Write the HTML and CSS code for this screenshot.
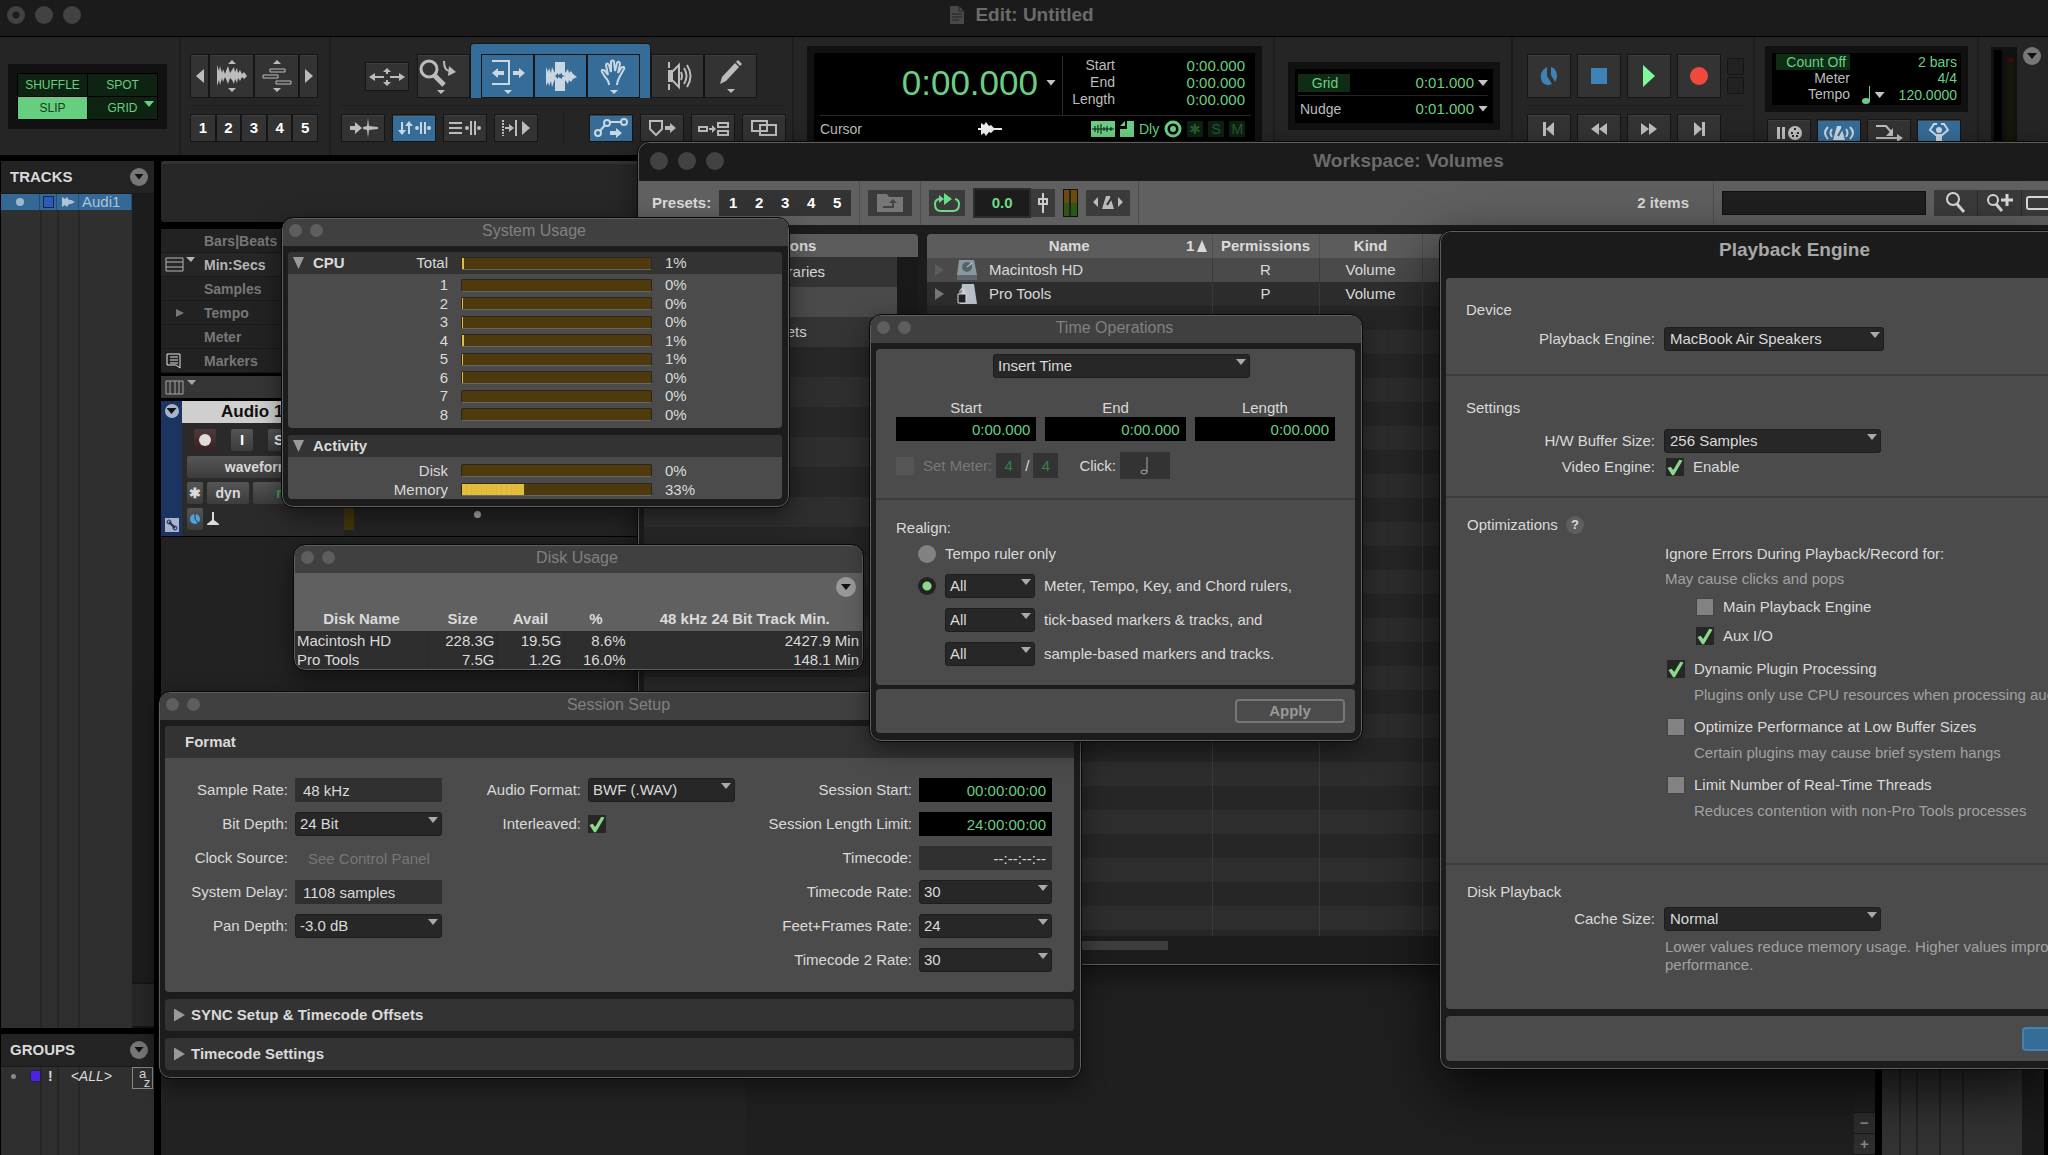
FILE: index.html
```html
<!DOCTYPE html>
<html lang="en">
<head>
    <meta charset="UTF-8">
    <meta name="viewport" content="width=device-width, initial-scale=1.0">
    <title>Edit: Untitled</title>
    <link rel="stylesheet" href="styles.css">
</head>
<body>

    <!-- Edit window title -->
    <header class="main-title">
        <div class="dots"><i class="dirty"></i><i></i><i></i></div>
        <h1>
            <svg width="16" height="20" viewBox="0 0 16 20"><path d="M1 1h9l5 5v13H1z" fill="#484848"/><path d="M10 1v5h5M3 9h10M3 12h10M3 15h7" stroke="#222" fill="none"/></svg>
            Edit: Untitled
        </h1>
    </header>

    <!-- Edit toolbar -->
    <div class="toolbar">
        <section class="tb-modes">
            <div class="modes">
                <button>SHUFFLE</button>
                <button>SPOT</button>
                <button class="active">SLIP</button>
                <button>GRID<span class="caret"></span></button>
            </div>
        </section>

        <section class="tb-zoom">
            <div class="joined">
                <button class="arrow" aria-label="Zoom out"><svg width="8" height="14" viewBox="0 0 8 14"><path d="M8 0v14L0 7z"/></svg></button>
                <button aria-label="Audio zoom"><svg width="32" height="34" viewBox="0 0 32 34"><path d="M12 5l4-4 4 4zM12 29l4 4 4-4zM1 6l2 6 1-5 2 7 1-4 2 5 1-3 2-5 2 7 2-3 2-3 1 5 2-4 1 5 2-3 2 4 2-2 3 4-3 3-2-2-2 4-2-3-1 5-2-4-1 5-2-4-2-2-2 6-2-5-1-2-2 5-1-4-2 7-1-5-2 6z"/></svg></button>
                <button aria-label="MIDI zoom"><svg width="32" height="34" viewBox="0 0 32 34"><path d="M12 5l4-4 4 4zM12 29l4 4 4-4z"/><path d="M9 10h15v3H9zM2 16h15v3H2zM15 22h15v3H15z" fill="none" stroke="currentColor"/></svg></button>
                <button class="arrow" aria-label="Zoom in"><svg width="8" height="14" viewBox="0 0 8 14"><path d="M0 0v14l8-7z"/></svg></button>
            </div>
            <div class="rule"></div>
            <div class="presets"><button>1</button><button>2</button><button>3</button><button>4</button><button>5</button></div>
        </section>

        <section class="tb-tools">
            <div class="tool-row">
                <button class="small" aria-label="Zoom toggle"><svg width="36" height="20" viewBox="0 0 36 20"><path d="M5 10h10M21 10h10M18 4v3M18 13v3" stroke="currentColor" stroke-width="2"/><path d="M0 10l6-4v8zM36 10l-6-4v8zM18 1l4 4h-8zM18 19l4-4h-8z"/></svg></button>
                <button class="tool zoomer" aria-label="Zoomer"><svg width="40" height="38" viewBox="0 0 40 38"><circle cx="11" cy="12" r="8" fill="none" stroke="currentColor" stroke-width="3"/><path d="M16 18l10 10" stroke="currentColor" stroke-width="5"/><path d="M26 4c0 6 2 10 6 10" stroke="currentColor" stroke-width="2" fill="none"/><path d="M31 9l7 6-8 4zM19 33h8l-4 4z"/></svg></button>
                <div class="smart">
                    <button class="tool" aria-label="Trim"><svg width="40" height="38" viewBox="0 0 40 38"><path d="M4 4h17v23H4" fill="none" stroke="currentColor" stroke-width="2"/><path d="M4 16l6-5v3h6v4h-6v3zM37 16l-6-5v3h-6v4h6v3zM16 33h8l-4 4z"/></svg></button>
                    <button class="tool" aria-label="Selector"><svg width="36" height="34" viewBox="0 0 36 34"><path d="M3 8l2 5 1-4 2 5 1-6 3 6V3h10v11l3-4 1 4 2-2 2 3 4 3-4 2-2 3-2-2-1 4-3-4v11H12V20l-3 8-1-6-2 5-1-4-2 4z"/><path d="M12 17l3-3v2l2-1 2-1v2l3 1-3 1v2l-2-1-2-1v2z" fill="#356a94"/></svg></button>
                    <button class="tool" aria-label="Grabber"><svg width="30" height="38" viewBox="0 0 30 38"><path d="M10 28c0-4-2-6-4-8l-3-5c-1-2 1-3 3-1l3 4-2-10c0-2 2-2 3 0l2 7V5c0-2 3-2 3 0l1 9 2-8c1-2 3-1 3 1l-2 9 3-5c2-2 4-1 3 1l-5 9c-1 2-2 4-2 7" fill="none" stroke="currentColor" stroke-width="2"/><path d="M11 33h8l-4 4z"/></svg></button>
                </div>
                <button class="tool" aria-label="Scrubber"><svg width="28" height="32" viewBox="0 0 28 32"><path d="M5 2v6M5 24v6M5 11h4l6-6v22l-6-6H5z" stroke="currentColor" fill="none" stroke-width="2"/><path d="M4 11h5v10H4z"/><path d="M17 12q2 4 0 8M20 8q5 8 0 16M23 5q7 11 0 22" fill="none" stroke="currentColor" stroke-width="2"/></svg></button>
                <button class="tool" aria-label="Pencil"><svg width="26" height="36" viewBox="0 0 26 36"><path d="M2 26l2-7L17 5l4 4L8 23zM18 4l2-2 4 4-2 2zM9 31h8l-4 4z"/></svg></button>
            </div>
            <div class="rule"></div>
            <div class="opt-row">
                <button aria-label="Tab to transients"><svg width="30" height="20" viewBox="0 0 30 20"><path d="M2 8h5V4l7 6-7 6v-4H2z"/><path d="M20 0l1 8 9 1v2l-9 1-1 8-1-8-4-1V9l4-1z"/></svg></button>
                <button class="on" aria-label="Link timeline"><svg width="34" height="20" viewBox="0 0 34 20"><path d="M5 4v12M12 4v12M24 4v12M28 4v12" stroke="currentColor" stroke-width="2"/><path d="M1 12h8l-4 5zM8 8h8l-4-5z"/><circle cx="20" cy="10" r="2"/><circle cx="32" cy="10" r="2"/></svg></button>
                <button aria-label="Link track"><svg width="34" height="20" viewBox="0 0 34 20"><path d="M1 5h13M1 10h13M1 15h13M23 3v14M27 3v14" stroke="currentColor" stroke-width="2"/><circle cx="19" cy="10" r="2"/><circle cx="31" cy="10" r="2"/></svg></button>
                <button aria-label="Insertion follows playback"><svg width="30" height="20" viewBox="0 0 30 20"><path d="M2 2v16" stroke="currentColor" stroke-width="2" stroke-dasharray="2 1"/><path d="M4 10h6M15 2v16" stroke="currentColor" stroke-width="2"/><path d="M8 6l5 4-5 4zM21 3v14l8-7z"/></svg></button>
                <span class="split"></span>
                <button class="on" aria-label="Automation follows edit"><svg width="34" height="20" viewBox="0 0 34 20"><path d="M6 13l5-6M16 4h11" stroke="currentColor" stroke-width="2"/><g fill="none" stroke="currentColor" stroke-width="2"><circle cx="4" cy="15" r="3"/><circle cx="13" cy="5" r="3"/><circle cx="30" cy="4" r="3"/></g><path d="M16 13h6v-3l6 5-6 5v-3h-6z"/></svg></button>
                <button aria-label="Mirrored editing"><svg width="30" height="20" viewBox="0 0 30 20"><path d="M3 3h12v8l-6 6-6-6z" fill="none" stroke="currentColor" stroke-width="2"/><path d="M18 8h5V5l6 5-6 5v-3h-5z"/></svg></button>
                <button aria-label="Layered editing"><svg width="32" height="20" viewBox="0 0 32 20"><path d="M2 9h8v4H2zM21 5h10v4H21zM21 13h10v4H21z" fill="none" stroke="currentColor" stroke-width="2"/><path d="M12 10h3V7l4 4-4 4v-3h-3z"/></svg></button>
                <button aria-label="Clip overlap"><svg width="26" height="20" viewBox="0 0 26 20"><path d="M1 3h15v10H1zM9 7h16v10H9z" fill="none" stroke="currentColor" stroke-width="2"/></svg></button>
            </div>
        </section>

        <section class="tb-counter">
            <div class="counter">
                <div class="counter-top">
                    <div class="main-counter"><output>0:00.000</output><span class="caret"></span></div>
                    <dl class="selection">
                        <dt>Start</dt><dd>0:00.000</dd>
                        <dt>End</dt><dd>0:00.000</dd>
                        <dt>Length</dt><dd>0:00.000</dd>
                    </dl>
                </div>
                <div class="counter-bottom">
                    <span class="cursor-label">Cursor</span>
                    <span class="cursor-icon"><svg width="24" height="16" viewBox="0 0 24 16"><path d="M0 7h3V2l3 2 2-3 3 4 2-1 3 3h8v2h-8l-3 3-2-1-3 4-2-3-3 2V9H0z"/></svg></span>
                    <span class="status">
                        <svg width="24" height="16" viewBox="0 0 24 16"><path d="M0 0h24v16H0z"/><path d="M1 8h22M4 5v6M7 4v8M10 3v10M13 6v4M16 5v6M20 6v4" stroke="#06210d"/></svg>
                        <svg width="14" height="16" viewBox="0 0 14 16"><path d="M7 0h7v16H0V8h7z"/><path d="M5 0v5H0z"/></svg>
                        <b>Dly</b>
                        <svg width="18" height="18" viewBox="0 0 18 18"><circle cx="9" cy="9" r="7" fill="none" stroke="currentColor" stroke-width="3"/><circle cx="9" cy="9" r="3"/></svg>
                        <i>✱</i><i>S</i><i>M</i>
                    </span>
                </div>
            </div>
        </section>

        <section class="tb-grid">
            <div class="lcd">
                <div class="lcd-row"><span class="lit">Grid</span><span class="val">0:01.000</span><span class="caret"></span></div>
                <div class="lcd-row"><span>Nudge</span><span class="val">0:01.000</span><span class="caret"></span></div>
            </div>
        </section>

        <section class="tb-transport">
            <div class="transport-main">
                <button aria-label="Online"><svg width="18" height="20" viewBox="0 0 18 20"><g fill="#3f82b5"><path d="M7 1v9l5 8q-6 3-10-2Q-2 6 7 1z"/><path d="M11 1q6 2 6 9 0 3-2 6l-4-7z"/></g></svg></button>
                <button aria-label="Stop"><svg width="16" height="16"><path d="M0 0h16v16H0z" fill="#3f82b5"/></svg></button>
                <button aria-label="Play"><svg width="12" height="22"><path d="M0 0l12 11L0 22z" fill="#7dfb9c"/></svg></button>
                <button aria-label="Record"><svg width="18" height="18"><circle cx="9" cy="9" r="9" fill="#ee4a3c"/></svg></button>
                <span class="lights"><i></i><i></i></span>
            </div>
            <div class="rule"></div>
            <div class="transport-sub">
                <button aria-label="Return to zero"><svg width="14" height="14"><path d="M1 0h3v14H1zM12 0v14L4 7z"/></svg></button>
                <button aria-label="Rewind"><svg width="16" height="12"><path d="M8 0v12L0 6zM16 0v12L8 6z"/></svg></button>
                <button aria-label="Fast forward"><svg width="16" height="12"><path d="M0 0v12l8-6zM8 0v12l8-6z"/></svg></button>
                <button aria-label="Go to end"><svg width="14" height="14"><path d="M10 0h3v14h-3zM2 0v14l8-7z"/></svg></button>
            </div>
        </section>

        <section class="tb-tempo">
            <div class="lcd tempo">
                <span class="lit">Count Off</span><span class="val">2 bars</span>
                <span>Meter</span><span class="val">4/4</span>
                <span>Tempo</span>
                <span class="val note"><svg width="9" height="18" viewBox="0 0 9 18"><path d="M7 0h1v14H7z"/><ellipse cx="4" cy="15" rx="4" ry="3"/></svg><span class="caret"></span><em>120.0000</em></span>
            </div>
            <div class="tempo-sub">
                <button aria-label="Wait for note"><svg width="26" height="18" viewBox="0 0 26 18"><path d="M1 3h3v12H1zM6 3h3v12H6z"/><circle cx="19" cy="9" r="7"/><path d="M15 9h2M21 9h2M18 5h2M16 12h2M20 12h2" stroke="#2a2a2a" stroke-width="2"/></svg></button>
                <button class="on" aria-label="Metronome"><svg width="32" height="18" viewBox="0 0 32 18"><path d="M5 3q-6 6 0 12M9 5q-3 4 0 8M27 3q6 6 0 12M23 5q3 4 0 8" fill="none" stroke="currentColor" stroke-width="2"/><path d="M14 2h4l4 14H10z"/><path d="M15 12l5-9" stroke="#356a94" stroke-width="2"/></svg></button>
                <button aria-label="Count off"><svg width="28" height="20" viewBox="0 0 28 20"><path d="M1 3h10l6 7M1 15h22" fill="none" stroke="currentColor" stroke-width="2"/><path d="M18 5v8h-7zM22 11l6 4-6 4z"/></svg></button>
                <button class="on" aria-label="Conductor"><svg width="22" height="22" viewBox="0 0 22 22"><circle cx="11" cy="8" r="3"/><path d="M9 2H6L2 8l7 6v7h4v-7l7-6-4-6h-3" fill="none" stroke="currentColor" stroke-width="2"/><path d="M8 12h6v10H8z"/></svg></button>
            </div>
        </section>

        <section class="tb-end">
            <div class="out-meter"><i></i></div>
            <button class="menu-dot" aria-label="Toolbar menu"></button>
        </section>
    </div>

    <!-- Edit window body -->
    <main class="edit">
        <aside class="side">
            <div class="side-head"><h2>TRACKS</h2><button class="menu-dot" aria-label="Tracks menu"></button></div>
            <div class="side-list tracks">
                <div class="track-item"><span class="c1"><i class="vis"></i></span><span class="c2"><i class="swatch"></i></span><span class="c3"><svg width="14" height="12" viewBox="0 0 14 12"><path d="M1 1l3 2 2-2 2 3h2l4 2-4 2H8l-2 3-2-2-3 2z"/></svg></span><span class="c4">Audi1</span></div>
                <div class="gutter"><i></i></div>
            </div>
            <div class="side-head groups-head"><h2>GROUPS</h2><button class="menu-dot" aria-label="Groups menu"></button></div>
            <div class="side-list groups">
                <div class="group-item"><i class="vis"></i><i class="swatch"></i><b>!</b><em>&lt;ALL&gt;</em></div>
                <button class="az" aria-label="Sort"><span>a</span><span class="z">z</span></button>
            </div>
        </aside>

        <div class="timeline">
            <div class="overview"></div>
            <ul class="rulers">
                <li>Bars|Beats</li>
                <li class="current"><svg width="26" height="16" viewBox="0 0 26 16"><path d="M1 1h17v13H1zM1 5h17M1 10h17" fill="none" stroke="currentColor"/><path d="M21 0h9l-4 5z"/></svg>Min:Secs</li>
                <li>Samples</li>
                <li><svg width="26" height="16" viewBox="0 0 26 16"><path d="M11 4v8l8-4z"/></svg>Tempo</li>
                <li>Meter</li>
                <li><svg width="26" height="16" viewBox="0 0 26 16"><path d="M2 1h13v14l-4-3H2zM5 4h8M5 7h8M5 10h8" fill="none" stroke="#e4e4e4"/></svg>Markers</li>
            </ul>
            <div class="columns-bar"><svg width="32" height="16" viewBox="0 0 32 16"><path d="M1 1h17v13H1zM5 1v13M10 1v13M14 1v13" fill="none" stroke="currentColor"/><path d="M22 0h9l-4 5z"/></svg></div>

            <div class="track">
                <div class="track-color">
                    <button class="menu-dot" aria-label="Track menu"></button>
                    <svg width="14" height="14" viewBox="0 0 14 14"><path d="M0 0h14v14H0z" fill="#a9b4cc"/><path d="M4 4l6 6" stroke="#1d2a4c" stroke-width="2"/><circle cx="4" cy="4" r="2" fill="none" stroke="#1d2a4c"/><circle cx="10" cy="10" r="2" fill="none" stroke="#1d2a4c"/></svg>
                </div>
                <div class="track-head">
                    <h3>Audio 1</h3>
                    <div class="track-row wide"><button class="rec" aria-label="Record enable"><i></i></button><button>I</button><button>S</button></div>
                    <div class="track-row"><button class="view">waveform</button></div>
                    <div class="track-row"><button class="tiny">✱</button><button class="dyn">dyn</button><button class="read">read</button></div>
                    <div class="track-row"><button class="tiny" aria-label="Timebase"><svg width="12" height="12" viewBox="0 0 12 12"><circle cx="6" cy="6" r="5" fill="#4fa3e0"/><path d="M6 0v6l4 5" stroke="#333" fill="none"/></svg></button><svg width="12" height="14" viewBox="0 0 12 14"><path d="M5 0h2v8l5 4v1H0v-1l5-4z"/></svg></div>
                </div>
                <div class="track-meter"></div>
                <div class="track-lane"></div>
            </div>
            <div class="track-empty"><div class="v-zoom"><i></i><button>−</button><button>+</button></div></div>
        </div>

        <aside class="clips"><div class="clip-cols"></div><div class="gutter"></div></aside>
    </main>

    <!-- Workspace browser -->
    <div class="window workspace">
        <div class="big-title"><div class="dots"><i></i><i></i><i></i></div><h2>Workspace: Volumes</h2></div>
        <div class="ws-toolbar">
            <div class="ws-group first"><b>Presets:</b><div class="ws-presets"><button>1</button><button>2</button><button>3</button><button>4</button><button>5</button></div></div>
            <div class="ws-group"><button class="ws-btn dim" aria-label="Up one level"><svg width="26" height="18" viewBox="0 0 26 18"><path d="M0 0h10l2 3h14v15H0z"/><path d="M6 13h10V8" fill="none" stroke="#444" stroke-width="2"/><path d="M12 9h8l-4-4z" fill="#444"/></svg></button></div>
            <div class="ws-group">
                <button class="ws-btn loop" aria-label="Loop preview"><svg width="26" height="20" viewBox="0 0 26 20"><path d="M7 6H5q-4 1-4 5 0 7 6 7h12q6 0 6-7 0-4-4-5" fill="none" stroke="currentColor" stroke-width="2"/><path d="M10 0v12l8-6zM5 2l5 4-5 4z"/></svg></button>
                <span class="gain"><output>0.0</output><svg width="24" height="24" viewBox="0 0 24 24"><path d="M12 2v20M8 8h8v5H8z" fill="none" stroke="#ccc" stroke-width="2"/></svg></span>
                <span class="ws-meter"></span>
                <button class="ws-btn" aria-label="Audition in tempo"><svg width="30" height="16" viewBox="0 0 30 16"><path d="M0 7l5-5v10zM30 7l-5-5v10zM13 1h4l4 13H9z"/><path d="M14 10l5-8" stroke="#333" stroke-width="2"/></svg></button>
            </div>
            <div class="ws-group stretch"><b>2 items</b></div>
            <div class="ws-group last">
                <input type="text" aria-label="Search volumes">
                <div class="ws-search">
                    <button aria-label="Search"><svg width="24" height="24" viewBox="0 0 24 24"><circle cx="9" cy="8" r="6" fill="none" stroke="currentColor" stroke-width="2"/><path d="M13 13l7 8" stroke="currentColor" stroke-width="3"/></svg></button>
                    <button aria-label="Advanced search"><svg width="30" height="24" viewBox="0 0 30 24"><circle cx="8" cy="9" r="5" fill="none" stroke="currentColor" stroke-width="2"/><path d="M11 13l6 7" stroke="currentColor" stroke-width="3"/><path d="M22 3v12M16 9h12" stroke="currentColor" stroke-width="3"/></svg></button>
                    <button class="view-mode" aria-label="View"><svg width="22" height="14" viewBox="0 0 22 14"><path d="M22 1H3q-2 0-2 2v8q0 2 2 2h19" fill="none" stroke="currentColor" stroke-width="2"/></svg></button>
                </div>
            </div>
        </div>
        <div class="ws-body">
            <div class="locations">
                <h4>Locations</h4>
                <ul><li>Sound Libraries</li><li></li><li>User Presets</li></ul>
            </div>
            <div class="volumes">
                <table>
                    <thead><tr><th class="v-name">Name<span>1<svg width="10" height="12"><path d="M5 0l5 12H0z"/></svg></span></th><th class="v-perm">Permissions</th><th class="v-kind">Kind</th><th></th></tr></thead>
                    <tbody>
                        <tr class="selected"><td><div class="vol"><svg width="10" height="12" class="faint"><path d="M0 0v12l9-6z"/></svg><svg width="20" height="20" viewBox="0 0 20 20"><path d="M2 0h15l3 15v5H0v-5z" fill="#8a979d"/><path d="M0 15h20v5H0z" fill="#5c686e"/><circle cx="10" cy="7" r="5" fill="#55646b"/><path d="M10 7l5-4" stroke="#dde"/></svg>Macintosh HD</div></td><td>R</td><td>Volume</td><td></td></tr>
                        <tr><td><div class="vol"><svg width="10" height="12"><path d="M0 0v12l9-6z" fill="#777"/></svg><svg width="20" height="20" viewBox="0 0 20 20"><path d="M5 0h12l3 20H3z" fill="#b9c0c8"/><path d="M1 10h8v9H1z" fill="#222" stroke="#ddd"/><path d="M3 10V6q2-3 4 0v4" fill="none" stroke="#ddd"/></svg>Pro Tools</div></td><td>P</td><td>Volume</td><td></td></tr>
                        <tr class="fill"><td></td><td></td><td></td><td></td></tr>
                    </tbody>
                </table>
            </div>
        </div>
        <div class="ws-scroll"><i></i></div>
    </div>

    <!-- System Usage -->
    <div class="window system-usage">
        <div class="small-title"><div class="dots"><i></i><i></i></div><h2>System Usage</h2></div>
        <div class="panel">
            <div class="usage head"><span class="open">CPU</span><label>Total</label><div class="bar"><i style="width: 1%"></i></div><span>1%</span></div>
            <div class="cores">
                <div class="usage"><label>1</label><div class="bar"><i style="width: 0%"></i></div><span>0%</span></div>
                <div class="usage"><label>2</label><div class="bar"><i style="width: 0.5%"></i></div><span>0%</span></div>
                <div class="usage"><label>3</label><div class="bar"><i style="width: 0.5%"></i></div><span>0%</span></div>
                <div class="usage"><label>4</label><div class="bar"><i style="width: 1%"></i></div><span>1%</span></div>
                <div class="usage"><label>5</label><div class="bar"><i style="width: 0.5%"></i></div><span>1%</span></div>
                <div class="usage"><label>6</label><div class="bar"><i style="width: 0.5%"></i></div><span>0%</span></div>
                <div class="usage"><label>7</label><div class="bar"><i style="width: 0%"></i></div><span>0%</span></div>
                <div class="usage"><label>8</label><div class="bar"><i style="width: 0%"></i></div><span>0%</span></div>
            </div>
        </div>
        <div class="panel">
            <div class="usage head"><span class="open">Activity</span></div>
            <div class="activity">
                <div class="usage"><label>Disk</label><div class="bar"><i style="width: 0%"></i></div><span>0%</span></div>
                <div class="usage"><label>Memory</label><div class="bar"><i style="width: 33%"></i></div><span>33%</span></div>
            </div>
        </div>
    </div>

    <!-- Disk Usage -->
    <div class="window disk-usage">
        <div class="small-title"><div class="dots"><i></i><i></i></div><h2>Disk Usage</h2></div>
        <div class="disk-menu"><button class="menu-dot" aria-label="Disk usage menu"></button></div>
        <table>
            <thead><tr><th class="d-name">Disk Name</th><th class="d-size">Size</th><th class="d-avail">Avail</th><th class="d-pct">%</th><th>48 kHz 24 Bit Track Min.</th></tr></thead>
            <tbody>
                <tr><td>Macintosh HD</td><td>228.3G</td><td>19.5G</td><td>8.6%</td><td>2427.9 Min</td></tr>
                <tr><td>Pro Tools</td><td>7.5G</td><td>1.2G</td><td>16.0%</td><td>148.1 Min</td></tr>
            </tbody>
        </table>
    </div>

    <!-- Session Setup -->
    <div class="window session">
        <div class="small-title"><div class="dots"><i></i><i></i></div><h2>Session Setup</h2></div>
        <div class="panel">
            <h3>Format</h3>
            <form class="format">
                <div class="fields">
                    <div class="row"><label for="rate">Sample Rate:</label><input id="rate" class="box" type="text" value="48 kHz" readonly></div>
                    <div class="row"><label for="depth">Bit Depth:</label><span class="select"><select id="depth"><option>24 Bit</option></select></span></div>
                    <div class="row"><label for="clock">Clock Source:</label><input id="clock" class="box off" type="text" value="See Control Panel" disabled></div>
                    <div class="row"><label for="delay">System Delay:</label><input id="delay" class="box" type="text" value="1108 samples" readonly></div>
                    <div class="row"><label for="pan">Pan Depth:</label><span class="select"><select id="pan"><option>-3.0 dB</option></select></span></div>
                </div>
                <div class="fields">
                    <div class="row"><label for="format">Audio Format:</label><span class="select"><select id="format"><option>BWF (.WAV)</option></select></span></div>
                    <div class="row"><label for="inter">Interleaved:</label><span class="check-cell"><input id="inter" type="checkbox" checked></span></div>
                </div>
                <div class="fields narrow">
                    <div class="row"><label for="start">Session Start:</label><input id="start" class="time" type="text" value="00:00:00:00"></div>
                    <div class="row"><label for="limit">Session Length Limit:</label><input id="limit" class="time" type="text" value="24:00:00:00"></div>
                    <div class="row"><label for="tc">Timecode:</label><input id="tc" class="box right" type="text" value="--:--:--:--" readonly></div>
                    <div class="row"><label for="tcr">Timecode Rate:</label><span class="select"><select id="tcr"><option>30</option></select></span></div>
                    <div class="row"><label for="ffr">Feet+Frames Rate:</label><span class="select"><select id="ffr"><option>24</option></select></span></div>
                    <div class="row"><label for="tc2">Timecode 2 Rate:</label><span class="select"><select id="tc2"><option>30</option></select></span></div>
                </div>
            </form>
        </div>
        <div class="panel"><h3 class="closed">SYNC Setup &amp; Timecode Offsets</h3></div>
        <div class="panel"><h3 class="closed">Timecode Settings</h3></div>
    </div>

    <!-- Time Operations -->
    <div class="window time-ops">
        <div class="small-title"><div class="dots"><i></i><i></i></div><h2>Time Operations</h2></div>
        <div class="panel">
            <div class="op-top">
                <span class="select op"><select aria-label="Operation"><option>Insert Time</option></select></span>
                <div class="times">
                    <label>Start<input class="time" type="text" value="0:00.000"></label>
                    <label>End<input class="time" type="text" value="0:00.000"></label>
                    <label>Length<input class="time" type="text" value="0:00.000"></label>
                </div>
                <div class="meter-row">
                    <input type="checkbox" id="setmeter" disabled>
                    <label class="off" for="setmeter">Set Meter:</label>
                    <input class="beat" type="text" value="4" aria-label="Beats" disabled>
                    <span>/</span>
                    <input class="beat" type="text" value="4" aria-label="Division" disabled>
                    <span class="click">Click:</span>
                    <button class="click-note" aria-label="Half note"><svg width="10" height="20" viewBox="0 0 10 20"><path d="M7 1v15" stroke="#aaa"/><ellipse cx="4" cy="16" rx="3" ry="2" fill="none" stroke="#aaa"/></svg></button>
                </div>
            </div>
            <div class="realign">
                <p>Realign:</p>
                <div class="r-row first"><input type="radio" name="realign" id="r1"><label for="r1">Tempo ruler only</label></div>
                <div class="r-row"><input type="radio" name="realign" id="r2" aria-label="Realign all" checked><span class="select"><select id="a1"><option>All</option></select></span><label for="a1">Meter, Tempo, Key, and Chord rulers,</label></div>
                <div class="r-row indent"><span class="select"><select id="a2"><option>All</option></select></span><label for="a2">tick-based markers &amp; tracks, and</label></div>
                <div class="r-row indent"><span class="select"><select id="a3"><option>All</option></select></span><label for="a3">sample-based markers and tracks.</label></div>
            </div>
        </div>
        <div class="panel foot"><button class="apply">Apply</button></div>
    </div>

    <!-- Playback Engine -->
    <div class="window playback">
        <div class="big-title"><h2>Playback Engine</h2></div>
        <div class="panel">
            <section>
                <h3>Device</h3>
                <div class="row"><label for="engine">Playback Engine:</label><span class="select device"><select id="engine"><option>MacBook Air Speakers</option></select></span></div>
            </section>
            <section>
                <h3 class="spaced">Settings</h3>
                <div class="row"><label for="buffer">H/W Buffer Size:</label><span class="select"><select id="buffer"><option>256 Samples</option></select></span></div>
                <div class="row video"><span class="lead">Video Engine:</span><label class="check"><input type="checkbox" checked>Enable</label></div>
            </section>
            <section class="optim">
                <h3>Optimizations <button class="help">?</button></h3>
                <div class="options">
                    <p>Ignore Errors During Playback/Record for:</p>
                    <p class="hint">May cause clicks and pops</p>
                    <label class="check sub"><input type="checkbox">Main Playback Engine</label>
                    <label class="check sub"><input type="checkbox" checked>Aux I/O</label>
                    <label class="check"><input type="checkbox" checked>Dynamic Plugin Processing</label>
                    <p class="hint in">Plugins only use CPU resources when processing audio</p>
                    <label class="check"><input type="checkbox">Optimize Performance at Low Buffer Sizes</label>
                    <p class="hint in">Certain plugins may cause brief system hangs</p>
                    <label class="check"><input type="checkbox">Limit Number of Real-Time Threads</label>
                    <p class="hint in">Reduces contention with non-Pro Tools processes</p>
                </div>
            </section>
            <section class="disk">
                <h3>Disk Playback</h3>
                <div class="row"><label for="cache">Cache Size:</label><span class="select"><select id="cache"><option>Normal</option></select></span></div>
                <p class="hint">Lower values reduce memory usage. Higher values improve<br>performance.</p>
            </section>
        </div>
        <div class="panel foot"><button class="ok" aria-label="OK"></button></div>
    </div>

</body>
</html>
```
FILE: styles.css
```css
/* General */
* {
    box-sizing: border-box;
}

html {
    overflow: hidden;
}

body {
    margin: 0;
    min-height: 100vh;
    display: flex;
    flex-direction: column;
    position: relative;
    overflow: hidden;
    background-color: #000;
    color: #dadada;
    font-family: "Liberation Sans", Arial, sans-serif;
    font-size: 15px;
    line-height: 18px;
}

h1, h2, h3, h4, p, ul, dl, dd {
    margin: 0;
    padding: 0;
}

ul {
    list-style: none;
}

button, input, select {
    font: inherit;
    color: inherit;
    margin: 0;
    padding: 0;
    border: 0;
    border-radius: 0;
    background: none;
}

button {
    display: flex;
    align-items: center;
    justify-content: center;
}

svg {
    display: block;
    flex: none;
    fill: currentColor;
}

.caret {
    width: 10px;
    height: 6px;
    background-color: #c4c4c4;
    clip-path: polygon(0 0, 100% 0, 50% 100%);
}

.dots {
    display: flex;
    gap: 10px;
}

.dots i {
    width: 18px;
    height: 18px;
    border-radius: 50%;
    background-color: #424242;
}

.dots .dirty {
    background: radial-gradient(circle, #1c1c1c 3px, #424242 4px);
}

.menu-dot {
    width: 18px;
    height: 18px;
    border-radius: 50%;
    background-color: #777;
}

.menu-dot::after {
    content: "";
    width: 10px;
    height: 6px;
    background-color: #111;
    clip-path: polygon(0 0, 100% 0, 50% 100%);
}

/* Main title bar */
.main-title {
    display: grid;
    grid-template-columns: 1fr auto 1fr;
    align-items: center;
    height: 36px;
    padding: 0 12px 6px 7px;
    background-color: #1b1b1b;
}

.main-title h1 {
    display: flex;
    align-items: center;
    gap: 10px;
    font-size: 19px;
    line-height: 22px;
    color: #6b6b6b;
}

/* Toolbar */
.toolbar {
    display: flex;
    height: 119px;
    background-color: #252525;
    border-top: 1px solid #000;
    color: #bcbcbc;
}

.toolbar section {
    flex: none;
    border-right: 2px solid #1d1d1d;
}

.toolbar button {
    background-color: #333;
    border: 1px solid #151515;
    box-shadow: inset 0 1px 0 #3d3d3d;
}

.toolbar button.on {
    background-color: #356c98;
    color: #c9d7e2;
}

.rule {
    height: 1px;
    margin: 7px 0 8px;
    background-color: #1d1d1d;
}

.tb-modes {
    padding: 27px 12px 0 8px;
}

.modes {
    display: grid;
    grid-template-columns: 69px 69px;
    gap: 1px;
    border: 9px solid #111;
    background-color: #000;
    padding: 1px;
}

.toolbar .modes button {
    position: relative;
    height: 22px;
    border: 0;
    box-shadow: none;
    background-color: #0f2313;
    color: #66cf7f;
    font-size: 12px;
}

.toolbar .modes .active {
    background-color: #66cf7f;
    color: #14401f;
}

.modes .caret {
    position: absolute;
    right: 3px;
    top: 4px;
    background-color: #66cf7f;
}

.tb-zoom {
    padding: 17px 11px 0 9px;
}

.joined {
    display: flex;
}

.joined button {
    width: 45px;
    height: 44px;
}

.joined .arrow {
    width: 19px;
}

.presets {
    display: grid;
    grid-template-columns: repeat(5, 1fr);
    color: #fff;
    font-weight: bold;
    font-size: 15px;
}

.presets button {
    height: 28px;
}

.tb-tools {
    padding: 6px 6px 0 10px;
}

.tool-row {
    display: flex;
    align-items: flex-end;
    height: 55px;
    padding-left: 24px;
}

.tool-row .small {
    width: 44px;
    height: 29px;
    margin: 0 8px 7px 0;
}

.tool {
    width: 53px;
    height: 44px;
}

.zoomer {
    justify-content: flex-start;
}

.smart {
    display: flex;
    padding: 10px 10px 0;
    background-color: #356c98;
    border: 1px solid #151515;
    border-bottom: 0;
    border-radius: 4px 4px 0 0;
}

.toolbar .smart button {
    background-color: #356c98;
    box-shadow: none;
    color: #c9d7e2;
}

.opt-row {
    display: flex;
    gap: 7px;
}

.opt-row button {
    width: 44px;
    height: 28px;
}

.opt-row .split {
    width: 1px;
    margin: 0 18px;
    background-color: #1b1b1b;
}

.tb-counter {
    padding: 9px 11px 0 13px;
}

.counter {
    height: 109px;
    border: 7px solid #111;
    background-color: #000;
    padding: 3px 4px 0 6px;
}

.counter-top {
    display: flex;
    width: 431px;
    height: 60px;
    border-bottom: 1px solid #2a2a2a;
}

.main-counter {
    display: flex;
    align-items: center;
    justify-content: flex-end;
    gap: 8px;
    width: 243px;
    padding: 0 6px 6px 0;
    border-right: 1px solid #2a2a2a;
}

.main-counter output {
    font-size: 35px;
    line-height: 40px;
    color: #6bce84;
}

.selection {
    flex: 1;
    display: grid;
    grid-template-columns: 52px 1fr;
    align-content: start;
    line-height: 17px;
    padding: 1px 6px 0 0;
}

.selection dt {
    font-size: 14px;
    text-align: right;
}

.selection dd {
    text-align: right;
    color: #6bce84;
}

.counter-bottom {
    display: flex;
    align-items: center;
    height: 25px;
    font-size: 14px;
}

.cursor-label {
    width: 158px;
}

.cursor-icon {
    width: 113px;
    color: #eee;
}

.status {
    display: flex;
    align-items: center;
    gap: 5px;
    color: #6bce84;
}

.status b {
    font-weight: normal;
}

.status i {
    width: 16px;
    height: 16px;
    line-height: 16px;
    font-style: normal;
    text-align: center;
    background-color: #0c2111;
    color: #28572f;
}

/* Small displays */
.tb-grid {
    padding: 25px 11px 0 13px;
}

.lcd {
    width: 212px;
    padding: 2px 5px 2px 3px;
    border: 7px solid #111;
    background-color: #000;
    font-size: 14px;
}

.lit {
    background-color: #0f2c15;
    color: #6bce84;
}

.lcd .val {
    color: #6bce84;
}

.lcd-row {
    display: grid;
    grid-template-columns: 52px 1fr 10px;
    align-items: center;
    gap: 4px;
    height: 24px;
}

.lcd-row + .lcd-row {
    height: 26px;
    border-top: 1px solid #252525;
}

.lcd-row span:first-child {
    padding-left: 2px;
}

.lcd-row .lit {
    text-align: center;
}

.lcd-row .val {
    text-align: right;
    font-size: 15px;
}

.tb-transport {
    padding: 17px 9px 0 14px;
}

.transport-main,
.transport-sub {
    display: flex;
    gap: 6px;
}

.transport-main button,
.transport-sub button {
    width: 44px;
    height: 44px;
}

.transport-sub button {
    height: 36px;
    padding-bottom: 6px;
}

.lights {
    display: flex;
    flex-direction: column;
    justify-content: space-between;
    padding: 4px 0;
}

.lights i {
    width: 17px;
    height: 17px;
    border: 1px solid #151515;
    border-radius: 2px;
    background-color: #222;
}

.tb-tempo {
    padding: 9px 9px 0 10px;
}

.tempo {
    display: grid;
    grid-template-columns: 74px 1fr;
    width: 203px;
    padding: 1px 4px;
    line-height: 16px;
}

.tempo span {
    text-align: right;
}

.tempo .lit {
    padding-right: 4px;
}

.tempo .note {
    display: flex;
    align-items: center;
    justify-content: flex-end;
    gap: 4px;
    height: 18px;
}

.note .caret {
    margin-right: 10px;
}

.note em {
    font-style: normal;
}

.tempo-sub {
    display: flex;
    gap: 6px;
    padding: 7px 0 0 2px;
}

.tempo-sub button {
    width: 44px;
    height: 28px;
}

.toolbar .tb-end {
    flex: 1;
    display: flex;
    gap: 6px;
    padding: 10px 0 0 12px;
    border: 0;
}

.out-meter {
    width: 26px;
    padding: 8px 0 6px 13px;
    border: 3px solid #111;
    background: linear-gradient(90deg, #000 8px, transparent 8px) #111;
}

.out-meter i {
    display: block;
    height: 100%;
    border-top: 4px solid #3c0b08;
    background-color: #16170a;
}

.tb-end .menu-dot {
    background-color: #777;
    border: 0;
    box-shadow: none;
}

/* Edit window body */
.edit {
    flex: 1;
    display: flex;
    padding: 6px 4px 0 1px;
    gap: 7px;
}

.side {
    width: 153px;
    display: flex;
    flex-direction: column;
}

.side-head {
    display: flex;
    align-items: center;
    justify-content: space-between;
    height: 33px;
    padding: 0 6px 1px 9px;
    background-color: #232323;
    border-bottom: 1px solid #1a1a1a;
}

.side-head h2 {
    font-size: 15px;
}

.side-list {
    position: relative;
    display: flex;
    align-items: flex-start;
    background: linear-gradient(90deg, transparent 39px, #262626 39px, #262626 41px, transparent 41px, transparent 56px, #262626 56px, #262626 58px, transparent 58px, transparent 77px, #262626 77px, #262626 79px, transparent 79px) #2f2f2f;
}

.tracks {
    flex: 1;
}

.track-item {
    flex: 1;
    display: grid;
    grid-template-columns: 39px 17px 22px 1fr;
    height: 16px;
    line-height: 16px;
    background-color: #336994;
    color: #abc4d8;
}

.track-item span {
    display: flex;
    align-items: center;
    justify-content: center;
    border-right: 1px solid #24506f;
}

.track-item .c4 {
    justify-content: flex-start;
    padding-left: 3px;
}

.vis {
    width: 8px;
    height: 8px;
    border-radius: 50%;
    background-color: #9db8cc;
}

.swatch {
    width: 11px;
    height: 12px;
    background-color: #2a5cc0;
    border: 1px solid #224;
}

.gutter {
    width: 22px;
    align-self: stretch;
    background-color: #1c1c1c;
}

.tracks .gutter {
    display: flex;
    align-items: flex-end;
}

.tracks .gutter i {
    width: 100%;
    height: 46px;
    background-color: #272727;
    border-top: 2px solid #151515;
    border-bottom: 2px solid #151515;
}

.groups-head {
    margin-top: 6px;
}

.groups {
    height: 88px;
    justify-content: space-between;
    padding: 0 1px 0 10px;
}

.group-item {
    display: flex;
    align-items: center;
    gap: 7px;
    height: 18px;
    font-size: 14px;
}

.group-item .vis {
    width: 5px;
    height: 5px;
    margin-right: 7px;
    background-color: #888;
}

.group-item .swatch {
    background-color: #4b23e0;
}

.group-item em {
    padding-left: 11px;
}

.az {
    flex-direction: column;
    width: 21px;
    height: 22px;
    border: 1px solid #888;
    font-size: 13px;
    line-height: 9px;
}

.az .z {
    padding-left: 9px;
}

/* Timeline */
.timeline {
    flex: 1;
    display: flex;
    flex-direction: column;
}

.overview {
    height: 61px;
    border-top: 3px solid #333;
    border-radius: 3px;
    background-color: #272727;
    margin-bottom: 7px;
}

.rulers {
    background-color: #222;
    color: #777;
    font-weight: bold;
    font-size: 14px;
}

.rulers li {
    display: flex;
    align-items: center;
    justify-content: flex-start;
    height: 24px;
    padding-left: 43px;
    border-bottom: 1px solid #191919;
}

.rulers svg {
    margin: 0 13px 0 -39px;
    overflow: visible;
}

.rulers .current {
    color: #b5b5b5;
    background-color: #262626;
}

.columns-bar {
    height: 22px;
    margin: 3px 0;
    padding: 4px;
    background-color: #353535;
    color: #a5a5a5;
}

.track {
    display: flex;
    height: 136px;
    background-color: #242424;
    border-bottom: 1px solid #000;
}

.track-color {
    display: flex;
    flex-direction: column;
    align-items: center;
    justify-content: space-between;
    width: 21px;
    padding: 3px 3px 4px;
    background-color: #1b3462;
}

.track-color .menu-dot {
    width: 14px;
    height: 14px;
    background-color: #a9b4cc;
}

.track-head {
    width: 162px;
    background-color: #2a2a2a;
}

.track-head h3 {
    height: 22px;
    margin-bottom: 6px;
    padding-left: 39px;
    background-color: #cfcfcf;
    color: #111;
    font-size: 17px;
    line-height: 22px;
}

.track-row {
    display: flex;
    align-items: center;
    gap: 4px;
    height: 22px;
    margin: 0 0 4px 5px;
    font-size: 14px;
    font-weight: bold;
}

.track-row.wide {
    gap: 15px;
    margin: 0 0 5px 12px;
    font-size: 15px;
    color: #fff;
}

.track-row button {
    width: 22px;
    height: 22px;
    border-radius: 2px;
    background: linear-gradient(#555, #3c3c3c);
}

.track-row .rec {
    background: linear-gradient(#4d3a3a, #3a2020);
}

.rec i {
    width: 12px;
    height: 12px;
    border-radius: 50%;
    background-color: #e0dcdc;
}

.track-row .view {
    width: 141px;
}

.track-row .tiny {
    width: 16px;
}

.track-row .dyn {
    width: 42px;
}

.track-row .read {
    width: 76px;
    color: #3fa35b;
}

.track-meter {
    width: 10px;
    margin: 4px 0 6px;
    background-color: #42380a;
}

.track-lane {
    flex: 1;
    padding: 110px 0 0 120px;
}

.track-lane::before {
    content: "";
    display: block;
    width: 7px;
    height: 7px;
    border-radius: 50%;
    background-color: #aaa;
}

.track-empty {
    flex: 1;
    display: flex;
    align-items: flex-end;
    justify-content: flex-end;
    background: linear-gradient(90deg, #222 584px, #1f1f1f 584px);
}

.v-zoom {
    width: 21px;
    background-color: #191919;
}

.v-zoom i,
.v-zoom button {
    display: flex;
    width: 21px;
    height: 20px;
    margin-bottom: 1px;
    background-color: #2e2e2e;
    color: #888;
    font-weight: bold;
}

.v-zoom i {
    height: 23px;
    background-color: #212121;
}

.clips {
    display: flex;
    width: 162px;
}

.clip-cols {
    flex: 1;
    background: linear-gradient(90deg, transparent 17px, #242424 17px, #242424 19px, transparent 19px, transparent 34px, #242424 34px, #242424 36px, transparent 36px, transparent 57px, #242424 57px, #242424 59px, transparent 59px, transparent 80px, #242424 80px, #242424 82px, transparent 82px) #333;
}

/* Floating windows */
.window {
    position: absolute;
    border: 1px solid #5e5e5e;
    border-radius: 11px;
    overflow: hidden;
    background-color: #1c1c1c;
    outline: 1px solid #0a0a0a;
    box-shadow: 0 8px 24px rgba(0, 0, 0, 0.5);
}

.small-title {
    height: 27px;
    padding: 4px 9px 4px 6px;
    background-color: #404040;
}

.small-title h2 {
    margin-top: -15px;
    text-align: center;
    font-size: 16px;
    font-weight: normal;
    color: #808080;
}

.small-title .dots {
    gap: 8px;
}

.small-title .dots i {
    width: 13px;
    height: 13px;
    margin-top: 1px;
    background-color: #5e5e5e;
}

.big-title {
    height: 38px;
    padding: 9px 11px;
    background-color: #1b1b1b;
}

.big-title h2 {
    font-size: 19px;
    line-height: 22px;
    text-align: center;
    color: #6b6b6b;
}

.big-title .dots + h2 {
    margin-top: -20px;
    padding-left: 130px;
}

.panel {
    margin: 0 6px 7px 5px;
    border-radius: 4px;
    overflow: hidden;
    background-color: #4b4b4b;
}

.small-title + .panel {
    margin-top: 6px;
}

/* Form controls */
.select {
    position: relative;
    display: inline-block;
    height: 24px;
}

.select select {
    appearance: none;
    width: 100%;
    height: 24px;
    padding: 0 4px;
    border: 1px solid #1d1d1d;
    border-radius: 3px;
    background-color: #272727;
}

.select::after {
    content: "";
    position: absolute;
    top: 5px;
    right: 4px;
    width: 10px;
    height: 6px;
    background-color: #aaa;
    clip-path: polygon(0 0, 100% 0, 50% 100%);
    pointer-events: none;
}

input[type="checkbox"] {
    appearance: none;
    width: 18px;
    height: 18px;
    flex: none;
    border: 1px solid #444;
    background-color: #828282;
}

input[type="checkbox"]:checked {
    border: 0;
    background-color: #262626;
}

input[type="checkbox"]:checked::before {
    content: "";
    display: block;
    width: 18px;
    height: 18px;
    background-color: #8bd88a;
    clip-path: polygon(8% 56%, 26% 48%, 40% 66%, 74% 10%, 92% 14%, 44% 96%, 34% 96%);
}

input[type="checkbox"]:disabled {
    background-color: #555;
    border-color: #555;
}

input[type="radio"] {
    appearance: none;
    width: 18px;
    height: 18px;
    flex: none;
    border-radius: 50%;
    background-color: #828282;
}

input[type="radio"]:checked {
    background: radial-gradient(circle, #8bd88a 4px, #222 5px);
}

.box {
    height: 24px;
    padding: 0 8px;
    background-color: #303030;
}

.box.right {
    text-align: right;
    padding: 0 6px;
}

.box.off {
    background-color: transparent;
    padding-left: 13px;
    color: #777;
}

.time {
    height: 24px;
    padding: 0 6px;
    background-color: #000;
    color: #6bce84;
    text-align: right;
}

/* Workspace */
.workspace {
    left: 638px;
    right: 0;
    top: 142px;
    height: 823px;
    display: flex;
    flex-direction: column;
    border-right: 0;
    border-radius: 11px 0 0 0;
}

.ws-toolbar {
    flex: none;
    display: flex;
    height: 44px;
    background-color: #606060;
}

.ws-group {
    display: flex;
    align-items: center;
    gap: 8px;
    padding: 0 8px;
    border-right: 1px solid #4e4e4e;
}

.ws-group.first {
    padding-left: 13px;
}

.ws-presets {
    display: flex;
    padding: 0 1px;
    background-color: #333;
    color: #fff;
    font-weight: bold;
}

.ws-presets button {
    width: 26px;
    height: 26px;
}

.ws-btn {
    width: 44px;
    height: 26px;
    background-color: #3b3b3b;
    color: #bbb;
}

.ws-btn.dim {
    color: #777;
}

.ws-btn.loop {
    width: 36px;
    color: #6bdc88;
}

.gain {
    display: flex;
    align-items: center;
    height: 28px;
    background-color: #3b3b3b;
}

.gain output {
    width: 58px;
    line-height: 26px;
    border: 2px solid #2c2c2c;
    background-color: #1c1c1c;
    color: #6bdc88;
    text-align: center;
    font-weight: bold;
}

.ws-meter {
    width: 15px;
    height: 28px;
    border: 1px solid #111;
    background: linear-gradient(90deg, transparent 5px, #222 5px, #222 7px, transparent 7px), linear-gradient(#6b4c0b 50%, #2d5717 50%);
}

.ws-group.stretch {
    flex: 1;
    justify-content: flex-end;
    padding-right: 24px;
}

.ws-group.last {
    width: 334px;
    border: 0;
    padding-right: 0;
}

.ws-group input {
    flex: none;
    width: 204px;
    height: 24px;
    border: 1px solid #111;
    background-color: #1f1f1f;
}

.ws-search {
    flex: 1;
    display: flex;
    gap: 1px;
    background-color: #2a2a2a;
}

.ws-search button {
    width: 43px;
    height: 26px;
    background-color: #3b3b3b;
}

.ws-search .view-mode {
    flex: 1;
    justify-content: flex-start;
    padding-left: 4px;
    overflow: hidden;
}

.ws-body {
    flex: 1;
    display: flex;
    gap: 9px;
    padding: 9px 0 0 5px;
}

.locations {
    width: 274px;
    display: flex;
    flex-direction: column;
    border-radius: 4px 4px 0 0;
    overflow: hidden;
}

.locations h4 {
    height: 23px;
    line-height: 23px;
    text-align: center;
    font-size: 15px;
    background-color: #5c5c5c;
}

.locations ul {
    flex: 1;
    border-right: 21px solid #191919;
    background: repeating-linear-gradient(#2e2e2e 0, #2e2e2e 30px, #272727 30px, #272727 60px);
}

.locations li {
    height: 30px;
    line-height: 30px;
    padding-left: 76px;
    background-color: #343434;
}

.locations li:nth-child(2) {
    background-color: #4a4a4a;
}

.volumes {
    flex: 1;
    border-radius: 4px 0 0 0;
    overflow: hidden;
    background: repeating-linear-gradient(#2d2d2d 0, #2d2d2d 24px, #262626 24px, #262626 48px);
}

.volumes table {
    width: 100%;
    height: 100%;
    border-collapse: collapse;
    table-layout: fixed;
    text-align: center;
}

.volumes th {
    height: 24px;
    padding: 0;
    background-color: #5c5c5c;
    border-right: 1px solid #4e4e4e;
}

.volumes td {
    height: 24px;
    padding: 0;
    border-right: 1px solid #3a3a3a;
}

.v-name {
    width: 285px;
}

.v-name span {
    position: absolute;
    display: flex;
    gap: 3px;
    align-items: center;
    margin: -18px 0 0 259px;
}

.v-perm {
    width: 107px;
}

.v-kind {
    width: 103px;
}

.selected td {
    background-color: #4a4a4a;
}

.volumes .fill td {
    height: auto;
}

.vol {
    display: flex;
    align-items: center;
    gap: 12px;
    height: 24px;
    padding-left: 8px;
}

.vol .faint {
    color: #5c5c5c;
}

.ws-scroll {
    height: 28px;
    padding: 5px 0 0 289px;
}

.ws-scroll i {
    display: block;
    width: 240px;
    height: 9px;
    background-color: #3d3d3d;
}

/* System Usage */
.system-usage {
    left: 282px;
    top: 218px;
    width: 507px;
}

.usage {
    display: grid;
    grid-template-columns: 160px 191px 1fr;
    column-gap: 13px;
    align-items: center;
}

.usage label {
    text-align: right;
}

.usage.head {
    height: 22px;
    grid-template-columns: 90px 57px 191px 1fr;
    background-color: #333;
}

.open {
    display: flex;
    align-items: center;
    gap: 9px;
    padding-left: 5px;
    font-weight: bold;
}

.open::before {
    content: "";
    width: 11px;
    height: 12px;
    background-color: #999;
    clip-path: polygon(0 0, 100% 0, 50% 100%);
}

.bar {
    height: 13px;
    border: 1px solid #2b2618;
    border-bottom-color: #666;
    border-radius: 2px;
    background-color: #4e3a0c;
}

.bar i {
    display: block;
    height: 100%;
    background: repeating-linear-gradient(90deg, #e4bd3c 0, #e4bd3c 4px, #dcb53a 4px, #dcb53a 5px);
}

.cores {
    display: grid;
    grid-auto-rows: 1fr;
    min-height: 154px;
    padding: 2px 0 4px;
}

.activity {
    display: grid;
    grid-auto-rows: 19px;
    padding: 4px 0 0;
}

/* Disk Usage */
.disk-usage {
    left: 294px;
    top: 545px;
    width: 569px;
    background-color: #2e2e2e;
}

.disk-menu {
    display: flex;
    justify-content: flex-end;
    height: 33px;
    padding: 4px 6px;
    background-color: #606060;
}

.disk-menu .menu-dot {
    width: 20px;
    height: 20px;
    background-color: #999;
}

.disk-usage table {
    width: 100%;
    border-collapse: collapse;
    table-layout: fixed;
}

.disk-usage th {
    height: 25px;
    padding: 0;
    background-color: #606060;
}

.disk-usage td {
    height: 19px;
    padding: 0 2px;
    text-align: right;
    border-right: 1px solid #282828;
}

.disk-usage td:first-child {
    text-align: left;
}

.d-name {
    width: 133px;
}

.d-size {
    width: 69px;
}

.d-avail {
    width: 67px;
}

.d-pct {
    width: 64px;
}

/* Session Setup */
.session {
    left: 159px;
    top: 692px;
    width: 922px;
}

.session h3 {
    height: 32px;
    padding-left: 20px;
    line-height: 32px;
    font-size: 15px;
    background-color: #333;
}

.session .closed {
    display: flex;
    align-items: center;
    gap: 6px;
    padding-left: 9px;
}

.closed::before {
    content: "";
    width: 11px;
    height: 13px;
    background-color: #999;
    clip-path: polygon(0 0, 100% 50%, 0 100%);
}

.format {
    display: grid;
    grid-template-columns: 276fr 293fr 317fr;
    padding: 20px 22px 10px 1px;
}

.row {
    display: flex;
    align-items: center;
    justify-content: flex-end;
    gap: 7px;
}

.fields .row {
    height: 24px;
    margin-bottom: 10px;
}

.fields .select,
.fields .box,
.check-cell {
    width: 147px;
}

.check-cell {
    display: flex;
}

.narrow .select,
.narrow .box,
.narrow .time {
    width: 133px;
}

/* Time Operations */
.time-ops {
    left: 870px;
    top: 315px;
    width: 492px;
}

.op-top {
    padding: 5px 20px 19px;
    border-bottom: 2px solid #3c3c3c;
}

.op {
    display: block;
    width: 257px;
    margin: 0 0 21px 97px;
}

.times {
    display: grid;
    grid-template-columns: repeat(3, 1fr);
    gap: 9px;
}

.times label {
    text-align: center;
}

.times .time {
    width: 100%;
}

.meter-row {
    display: flex;
    align-items: center;
    gap: 4px;
    padding-top: 11px;
}

.meter-row .off {
    padding-left: 5px;
    color: #777;
}

.beat {
    width: 25px;
    height: 25px;
    background-color: #333;
    color: #2f8446;
    text-align: center;
}

.meter-row .click {
    padding-left: 17px;
}

.click-note {
    width: 50px;
    height: 27px;
    background-color: #333;
}

.realign {
    padding: 19px 20px 9px;
}

.realign p {
    margin-bottom: 8px;
}

.r-row {
    display: flex;
    align-items: center;
    gap: 9px;
    padding-left: 22px;
    margin-bottom: 10px;
}

.r-row.first {
    margin-bottom: 11px;
}

.r-row.indent {
    padding-left: 49px;
}

.r-row .select {
    width: 90px;
}

.time-ops .foot {
    display: flex;
    justify-content: flex-end;
    margin-top: -3px;
    padding: 10px;
}

.apply {
    width: 110px;
    height: 24px;
    border: 2px solid #777;
    border-radius: 4px;
    color: #999;
    font-weight: bold;
    font-size: 15px;
}

/* Playback Engine */
.playback {
    left: 1440px;
    right: 0;
    top: 231px;
    border-right: 0;
    border-radius: 11px 0 0 11px;
    box-shadow: 0 20px 60px rgba(0, 0, 0, 0.8);
}

.playback .panel {
    margin-right: 0;
    border-radius: 4px 0 0 4px;
}

.playback .big-title {
    height: 46px;
    padding-top: 7px;
}

.playback .big-title h2 {
    padding-left: 100px;
    color: #a8a8a8;
}

.playback section {
    padding: 23px 0 19px;
    border-bottom: 2px solid #3c3c3c;
}

.playback h3 {
    margin: 0 0 8px 20px;
    font-size: 15px;
    font-weight: normal;
}

.playback h3.spaced {
    margin-bottom: 12px;
}

.playback .row {
    justify-content: flex-start;
    gap: 9px;
    margin-bottom: 4px;
}

.row > .lead,
.playback .row > label:first-child {
    width: 209px;
    text-align: right;
}

.playback .select {
    width: 217px;
}

.playback .device {
    width: 220px;
}

.playback .select select {
    padding-left: 5px;
}

.check {
    display: flex;
    align-items: center;
    gap: 9px;
    height: 20px;
    margin-top: 13px;
    padding-left: 2px;
}

.playback .row.video {
    margin-bottom: 0;
}

.playback .video .check {
    margin-top: 0;
}

.check.sub {
    margin-top: 9px;
    padding-left: 31px;
}

.hint {
    margin-top: 7px;
    color: #a2a2a2;
    white-space: nowrap;
}

.hint.in {
    padding-left: 29px;
}

.playback .optim {
    padding: 18px 0 43px;
}

.playback .optim h3 {
    display: flex;
    align-items: center;
    gap: 8px;
    height: 18px;
    margin: 0 0 11px 21px;
}

.help {
    width: 18px;
    height: 18px;
    border-radius: 50%;
    background-color: #5e5e5e;
    font-size: 13px;
    font-weight: bold;
}

.options,
.disk .hint {
    padding-left: 219px;
}

.playback .disk {
    padding: 18px 0 35px;
    border: 0;
}

.playback .disk h3 {
    margin: 0 0 6px 21px;
}

.playback .foot {
    display: flex;
    padding: 11px 0 10px 576px;
}

.ok {
    flex: 1;
    height: 24px;
    border: 2px solid #4682b0;
    border-right: 0;
    border-radius: 4px 0 0 4px;
    background-color: #356c98;
}
```
